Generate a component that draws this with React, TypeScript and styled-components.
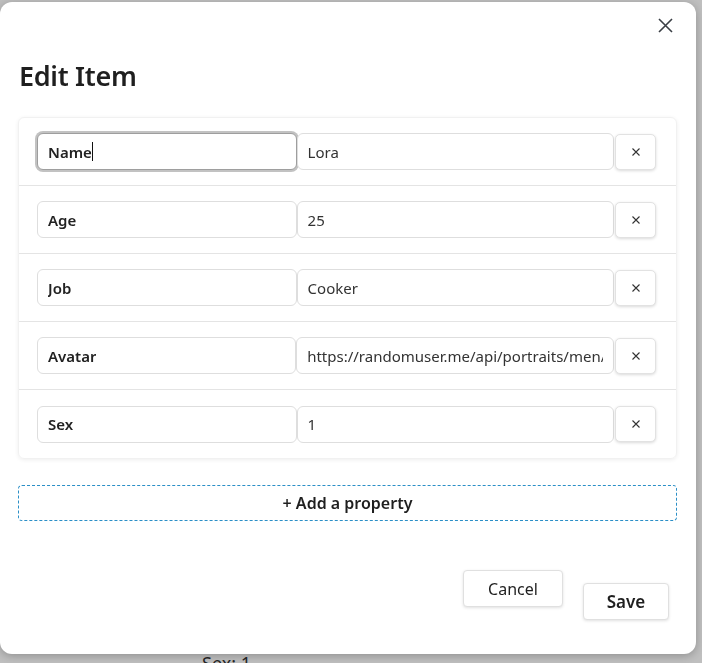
import React from "react";
import styled, { createGlobalStyle } from "styled-components";

const Global = createGlobalStyle`
  html, body { margin: 0; padding: 0; background: #fff; }
  body { font-family: "Noto Sans", "Open Sans", sans-serif; overflow: hidden; }
  * { box-sizing: border-box; }
`;

const BackPage = styled.div`
  width: 702px;
  height: 663px;
  padding: 651px 0 0 202px;
  color: #333;
  font-size: 18px;
  line-height: 24px;
`;

const Overlay = styled.div`
  position: fixed;
  inset: 0;
  background: rgba(0, 0, 0, 0.25);
  padding: 2px 0 0 0;
`;

const Dialog = styled.div`
  width: 696px;
  height: 652px;
  background: #fff;
  border-radius: 12px;
  box-shadow: 0 2px 10px rgba(0, 0, 0, 0.25);
  display: flex;
  flex-direction: column;
  padding: 0 19px 0 18px;
`;

const Header = styled.div`
  display: flex;
  justify-content: flex-end;
  padding: 14px 3px 0 0;
  height: 44px;
`;

const CloseButton = styled.button`
  width: 18px;
  height: 18px;
  padding: 0;
  border: none;
  background: none;
  display: flex;
  align-items: center;
  justify-content: center;
  color: #3a3f45;
`;

const Title = styled.h2`
  margin: 12px 0 0 1px;
  font-size: 27px;
  font-weight: 600;
  color: #1f1f1f;
  line-height: 36px;
  letter-spacing: -0.3px;
`;

const Card = styled.div`
  margin-top: 23px;
  border: 1px solid #f1f1f1;
  border-radius: 6px;
  box-shadow: 0 1px 4px rgba(0, 0, 0, 0.07);
  display: flex;
  flex-direction: column;
`;

const Row = styled.div<{ $last?: boolean }>`
  display: flex;
  align-items: center;
  padding: 15px 20px 15px 18px;
  border-bottom: ${(p) => (p.$last ? "none" : "1px solid #e4e4e4")};
  height: 68px;
`;

const Field = styled.div<{ $key?: boolean; $focused?: boolean }>`
  height: 37px;
  width: ${(p) => (p.$key ? "260px" : "318px")};
  border: 1px solid ${(p) => (p.$focused ? "#9e9e9e" : "#dedede")};
  box-shadow: ${(p) => (p.$focused ? "0 0 0 2px #c2c2c2" : "none")};
  border-radius: 6px;
  padding: 0 10px;
  display: flex;
  align-items: center;
  font-size: 15px;
  font-weight: ${(p) => (p.$key ? 600 : 400)};
  color: ${(p) => (p.$key ? "#222" : "#333")};
  background: #fff;
`;

const FieldText = styled.span`
  display: block;
  white-space: nowrap;
  overflow: hidden;
  max-width: 100%;
`;

const Caret = styled.span`
  display: inline-block;
  flex: none;
  width: 1px;
  height: 19px;
  background: #111;
`;

const RemoveButton = styled.button`
  width: 41px;
  height: 36px;
  margin-left: 1px;
  border: 1px solid #e2e2e2;
  border-radius: 5px;
  background: #fff;
  box-shadow: 0 1px 3px rgba(0, 0, 0, 0.15);
  display: flex;
  align-items: center;
  justify-content: center;
  padding: 0;
  color: #222;
`;

const AddButton = styled.button`
  margin-top: 26px;
  height: 36px;
  width: 659px;
  border: 1px dashed #2b8fc7;
  border-radius: 4px;
  background: #fff;
  font-family: inherit;
  font-size: 16px;
  font-weight: 600;
  color: #1f1f1f;
  display: flex;
  align-items: center;
  justify-content: center;
`;

const Footer = styled.div`
  margin-top: 49px;
  display: flex;
  justify-content: flex-end;
  align-items: flex-start;
  gap: 20px;
  padding-right: 8px;
`;

const FooterButton = styled.button<{ $primary?: boolean }>`
  height: 37px;
  width: ${(p) => (p.$primary ? "86px" : "100px")};
  margin-top: ${(p) => (p.$primary ? "13px" : "0")};
  border: 1px solid #e0e0e0;
  border-radius: 4px;
  background: #fff;
  box-shadow: 0 1px 3px rgba(0, 0, 0, 0.12);
  font-family: inherit;
  font-size: ${(p) => (p.$primary ? "17px" : "16px")};
  font-weight: ${(p) => (p.$primary ? 600 : 400)};
  color: #1f1f1f;
  padding: 0;
`;

const items = [
  { key: "Name", value: "Lora" },
  { key: "Age", value: "25" },
  { key: "Job", value: "Cooker" },
  { key: "Avatar", value: "https://randomuser.me/api/portraits/men/1.jpg" },
  { key: "Sex", value: "1" },
];

const SmallX = () => (
  <svg width="10" height="10" viewBox="0 0 10 10">
    <path d="M1.5 1.5 L8.5 8.5 M8.5 1.5 L1.5 8.5" stroke="#333" strokeWidth="1.1" />
  </svg>
);

export default function App() {
  return (
    <>
      <Global />
      <BackPage>Sex: 1</BackPage>
      <Overlay>
        <Dialog>
          <Header>
            <CloseButton aria-label="Close">
              <svg width="15" height="15" viewBox="0 0 15 15">
                <path d="M1 1 L14 14 M14 1 L1 14" stroke="#3a3f45" strokeWidth="1.6" />
              </svg>
            </CloseButton>
          </Header>
          <Title>Edit Item</Title>
          <Card>
            {items.map((it, i) => (
              <Row key={it.key} $last={i === items.length - 1}>
                <Field $key $focused={i === 0}>
                  <FieldText>{it.key}</FieldText>
                  {i === 0 && <Caret />}
                </Field>
                <Field>
                  <FieldText>{it.value}</FieldText>
                </Field>
                <RemoveButton aria-label="Remove">
                  <SmallX />
                </RemoveButton>
              </Row>
            ))}
          </Card>
          <AddButton>+ Add a property</AddButton>
          <Footer>
            <FooterButton>Cancel</FooterButton>
            <FooterButton $primary>Save</FooterButton>
          </Footer>
        </Dialog>
      </Overlay>
    </>
  );
}
